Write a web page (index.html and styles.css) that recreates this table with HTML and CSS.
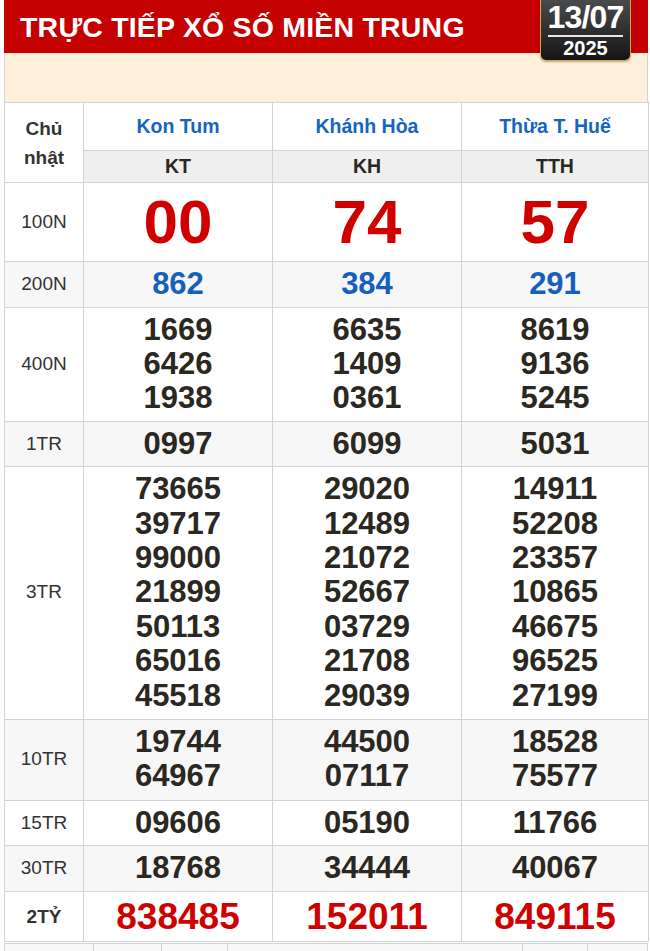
FILE: index.html
```html
<!DOCTYPE html>
<html lang="vi">
<head>
<meta charset="utf-8">
<title>Trực tiếp xổ số miền Trung</title>
<link rel="stylesheet" href="styles.css">
</head>
<body>
<div class="page">
  <div class="head">
    <h1 class="title">TRỰC TIẾP XỔ SỐ MIỀN TRUNG</h1>
    <div class="date">
      <div class="dm">13/07</div>
      <div class="yr">2025</div>
    </div>
  </div>
  <div class="banner"></div>
  <table class="kq">
    <colgroup>
      <col class="c-lbl"><col class="c-p"><col class="c-p"><col class="c-p3">
    </colgroup>
    <tr class="prov">
      <th rowspan="2" class="day">Chủ<br>nhật</th>
      <th>Kon Tum</th><th>Khánh Hòa</th><th>Thừa T. Huế</th>
    </tr>
    <tr class="code">
      <th>KT</th><th>KH</th><th>TTH</th>
    </tr>
    <tr class="g8">
      <td class="lbl">100N</td>
      <td>00</td><td>74</td><td>57</td>
    </tr>
    <tr class="g7 alt">
      <td class="lbl">200N</td>
      <td>862</td><td>384</td><td>291</td>
    </tr>
    <tr class="gn">
      <td class="lbl">400N</td>
      <td><div>1669</div><div>6426</div><div>1938</div></td>
      <td><div>6635</div><div>1409</div><div>0361</div></td>
      <td><div>8619</div><div>9136</div><div>5245</div></td>
    </tr>
    <tr class="gn alt">
      <td class="lbl">1TR</td>
      <td>0997</td><td>6099</td><td>5031</td>
    </tr>
    <tr class="gn tall">
      <td class="lbl">3TR</td>
      <td><div>73665</div><div>39717</div><div>99000</div><div>21899</div><div>50113</div><div>65016</div><div>45518</div></td>
      <td><div>29020</div><div>12489</div><div>21072</div><div>52667</div><div>03729</div><div>21708</div><div>29039</div></td>
      <td><div>14911</div><div>52208</div><div>23357</div><div>10865</div><div>46675</div><div>96525</div><div>27199</div></td>
    </tr>
    <tr class="gn alt tall">
      <td class="lbl">10TR</td>
      <td><div>19744</div><div>64967</div></td>
      <td><div>44500</div><div>07117</div></td>
      <td><div>18528</div><div>75577</div></td>
    </tr>
    <tr class="gn">
      <td class="lbl">15TR</td>
      <td>09606</td><td>05190</td><td>11766</td>
    </tr>
    <tr class="gn alt">
      <td class="lbl">30TR</td>
      <td>18768</td><td>34444</td><td>40067</td>
    </tr>
    <tr class="db">
      <td class="lbl bold">2TỶ</td>
      <td>838485</td><td>152011</td><td>849115</td>
    </tr>
  </table>
  <div class="more">
    <span class="m1"></span><span class="m2"></span><span class="m3"></span><span class="m4"></span><span class="m5"></span><span class="m6"></span>
  </div>
</div>
</body>
</html>
```

FILE: styles.css
```css
html, body {
  margin: 0;
  padding: 0;
  background: #ffffff;
}
body {
  font-family: "Liberation Sans", Arial, sans-serif;
}
.page {
  margin-left: 4px;
  width: 644px;
}
.head {
  position: relative;
  height: 53px;
  background: #c40000;
  display: flex;
  align-items: center;
  padding-left: 16px;
  box-sizing: border-box;
}
.title {
  margin: 0;
  color: #ffffff;
  font-size: 28.5px;
  font-weight: 700;
  line-height: 32px;
  letter-spacing: 0.2px;
}
.date {
  position: absolute;
  top: 0;
  right: 17px;
  width: 91px;
  height: 61px;
  box-sizing: border-box;
  background: linear-gradient(#4a4a4a, #151515);
  border: 1px solid #d9aa40;
  border-top: none;
  border-radius: 0 0 6px 6px;
  color: #ffffff;
  text-align: center;
  z-index: 2;
  box-shadow: 0 1px 2px rgba(0,0,0,0.3);
}
.dm {
  font-size: 32px;
  font-weight: 700;
  line-height: 34px;
  letter-spacing: -0.8px;
}
.yr {
  margin: 1px 7px 0;
  border-top: 2px solid #e8e8e8;
  font-size: 20px;
  font-weight: 700;
  line-height: 22px;
}
.banner {
  height: 49px;
  background: #fdefd9;
  border-left: 1px solid #d3d3d3;
  border-right: 1px solid #d3d3d3;
  box-sizing: border-box;
}
.kq {
  width: 644px;
  border-collapse: collapse;
  table-layout: fixed;
}
.c-lbl { width: 79px; }
.c-p { width: 189px; }
.c-p3 { width: 187px; }
.kq th, .kq td {
  border: 1px solid #d3d3d3;
  text-align: center;
  vertical-align: middle;
  padding: 0;
}
.prov th {
  height: 47px;
  color: #1565c0;
  font-size: 19.5px;
  font-weight: 700;
}
.code th {
  height: 31px;
  background: #efefef;
  color: #2b2721;
  font-size: 19.5px;
  font-weight: 700;
}
.kq .day {
  background: #ffffff;
  color: #333333;
  font-size: 19px;
  font-weight: 700;
  line-height: 29px;
}
.kq td {
  color: #2b2721;
  font-size: 31px;
  font-weight: 700;
  line-height: 34.5px;
  padding: 5px 0;
}
.kq td.lbl {
  color: #333333;
  font-size: 19px;
  font-weight: 400;
}
.kq td.lbl.bold {
  font-weight: 700;
}
.alt td {
  background: #f7f7f7;
}
.g8 td {
  color: #d00000;
  font-size: 62px;
  line-height: 68px;
}
.g7 td {
  color: #1560bd;
}
.kq .tall td {
  padding: 5px 0 6px;
}
.kq .gn td {
  line-height: 34.4px;
}
.db td {
  color: #d00000;
  font-size: 37px;
  line-height: 39px;
}
.more {
  display: flex;
  height: 10px;
  margin-top: 1px;
  border-top: 1px solid #d3d3d3;
  box-sizing: border-box;
}
.more span {
  display: block;
  border-left: 1px solid #d3d3d3;
  background: #f8f8f8;
}
.m1 { width: 88px; }
.m2 { width: 67px; }
.m3 { width: 65px; }
.m4 { width: 294px; }
.m5 { width: 64px; }
.m6 { flex: 1; border-right: 1px solid #d3d3d3; }
```
